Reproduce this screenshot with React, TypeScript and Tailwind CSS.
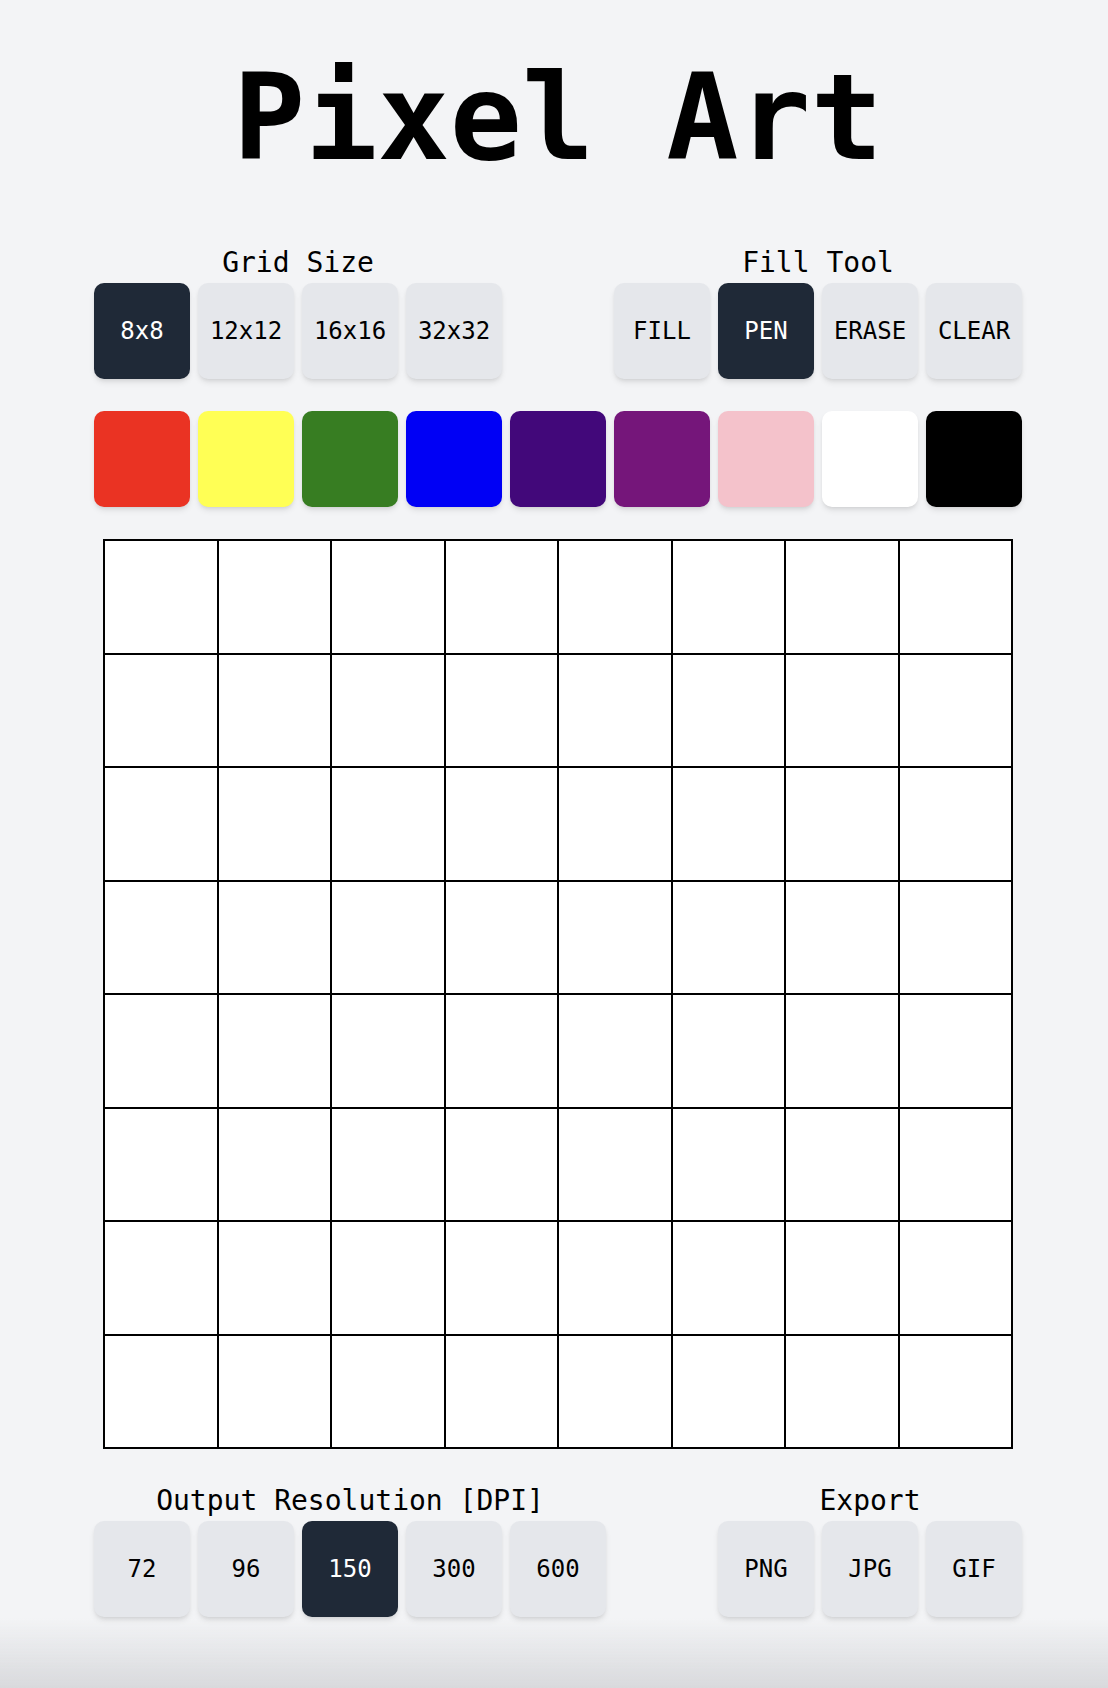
type GroupProps = {
  label: string;
  options: string[];
  active: string;
};

function ButtonGroup({ label, options, active }: GroupProps) {
  return (
    <div className="flex flex-col items-center">
      <div className="mb-1 text-[28px] leading-8">{label}</div>
      <div className="flex gap-2">
        {options.map((opt) => (
          <button
            key={opt}
            className={
              opt === active
                ? "h-24 w-24 rounded-[10px] bg-[#1f2937] text-[24px] text-white shadow-md"
                : "h-24 w-24 rounded-[10px] bg-[#e5e7eb] text-[24px] text-black shadow-md"
            }
          >
            {opt}
          </button>
        ))}
      </div>
    </div>
  );
}

const colors = [
  "#ea3323",
  "#ffff55",
  "#377d22",
  "#0000f5",
  "#42087a",
  "#75167a",
  "#f4c2cb",
  "#ffffff",
  "#000000",
];

export default function App() {
  return (
    <div className="min-h-screen bg-[#f3f4f6] pl-2 font-['DejaVu_Sans_Mono',monospace] text-black">
      <div className="mx-auto flex w-[928px] flex-col items-center pt-[58px] pb-16">
        <h1 className="text-[120px] font-bold leading-none">Pixel Art</h1>

        {/* Top controls */}
        <div className="mt-[69px] flex w-full justify-between">
          <ButtonGroup label="Grid Size" options={["8x8", "12x12", "16x16", "32x32"]} active="8x8" />
          <ButtonGroup label="Fill Tool" options={["FILL", "PEN", "ERASE", "CLEAR"]} active="PEN" />
        </div>

        {/* Palette */}
        <div className="mt-8 flex gap-2">
          {colors.map((c) => (
            <button
              key={c}
              className="h-24 w-24 rounded-[10px] shadow-md"
              style={{ backgroundColor: c }}
            />
          ))}
        </div>

        {/* Canvas */}
        <div className="mt-8 grid w-[910px] grid-cols-8 border border-black">
          {Array.from({ length: 64 }).map((_, i) => (
            <div key={i} className="aspect-square border border-black bg-white" />
          ))}
        </div>

        {/* Bottom controls */}
        <div className="mt-9 flex w-full justify-between">
          <ButtonGroup
            label="Output Resolution [DPI]"
            options={["72", "96", "150", "300", "600"]}
            active="150"
          />
          <ButtonGroup label="Export" options={["PNG", "JPG", "GIF"]} active="" />
        </div>
      </div>
      <div className="pointer-events-none fixed inset-x-0 bottom-0 h-[70px] bg-gradient-to-b from-[#f3f4f600] to-[#d8d9dc]" />
    </div>
  );
}
